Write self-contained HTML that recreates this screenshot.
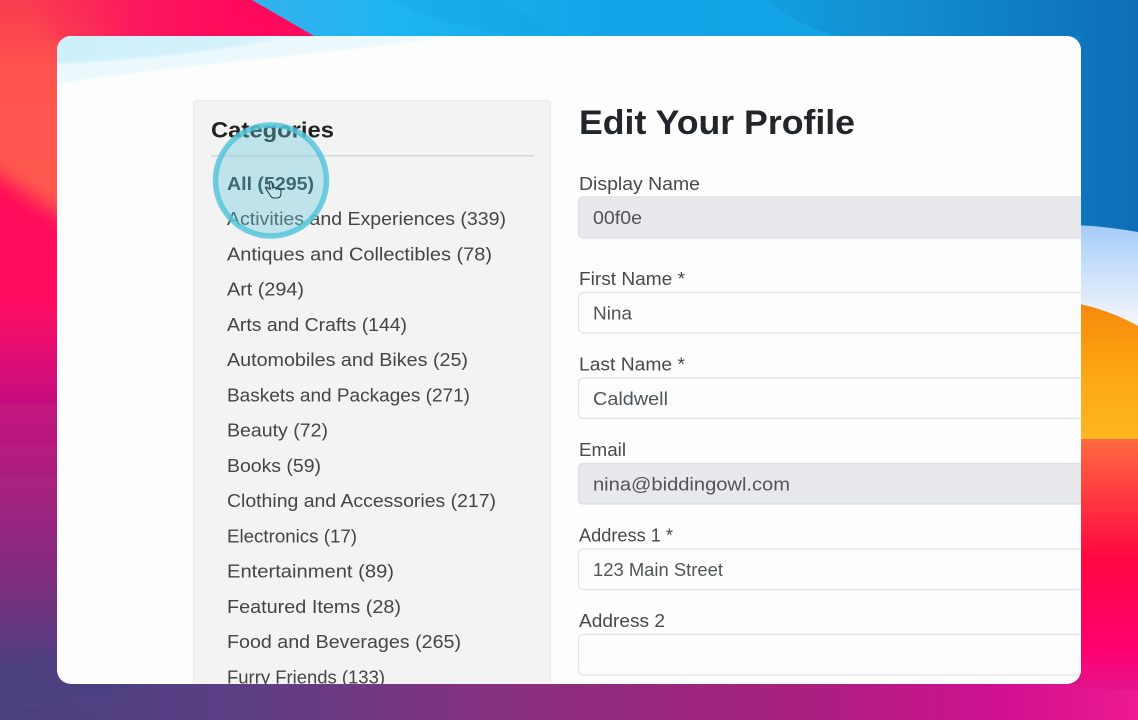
<!DOCTYPE html>
<html lang="en">
<head>
<meta charset="utf-8">
<title>Edit Your Profile</title>
<style>
html,body{margin:0;padding:0;width:1138px;height:720px;overflow:hidden;background:#5a3f85}
svg{display:block;position:absolute;left:0;top:0}
text{font-family:"Liberation Sans",sans-serif}
</style>
</head>
<body>
<svg width="1138" height="720" viewBox="0 0 1138 720" xmlns="http://www.w3.org/2000/svg">
<defs>
<linearGradient id="bottom" x1="0" y1="0" x2="1" y2="0">
<stop offset="0" stop-color="#4a4080"/><stop offset=".2" stop-color="#5a3f85"/><stop offset=".45" stop-color="#88307f"/><stop offset=".7" stop-color="#a8207f"/><stop offset=".88" stop-color="#d01090"/><stop offset="1" stop-color="#ee1a90"/>
</linearGradient>
<linearGradient id="left" x1="0" y1="0" x2="0" y2="720" gradientUnits="userSpaceOnUse">
<stop offset="0" stop-color="#ff0a48"/><stop offset=".42" stop-color="#ff0a62"/><stop offset=".55" stop-color="#c8107f"/><stop offset=".7" stop-color="#a0257f"/><stop offset=".82" stop-color="#7a2f80"/><stop offset=".93" stop-color="#4a4080"/><stop offset="1" stop-color="#4a4080"/>
</linearGradient>
<linearGradient id="coral" x1="0" y1="0" x2="0" y2="220" gradientUnits="userSpaceOnUse">
<stop offset="0" stop-color="#f83a50"/><stop offset=".3" stop-color="#ff5450"/><stop offset="1" stop-color="#ff5a50"/>
</linearGradient>
<linearGradient id="topred" x1="30" y1="0" x2="230" y2="0" gradientUnits="userSpaceOnUse">
<stop offset="0" stop-color="#fb1d58" stop-opacity="0"/><stop offset=".5" stop-color="#fb1a5e"/><stop offset="1" stop-color="#ff0a5c"/>
</linearGradient>
<linearGradient id="blue" x1="250" y1="0" x2="1138" y2="0" gradientUnits="userSpaceOnUse">
<stop offset="0" stop-color="#35b2ec"/><stop offset=".15" stop-color="#1fb5f2"/><stop offset=".4" stop-color="#12a6e8"/><stop offset="1" stop-color="#11a0e0"/>
</linearGradient>
<linearGradient id="swoosh" x1="760" y1="0" x2="1138" y2="0" gradientUnits="userSpaceOnUse">
<stop offset="0" stop-color="#119fdf"/><stop offset=".3" stop-color="#1391d4"/><stop offset=".65" stop-color="#0f7fc6"/><stop offset="1" stop-color="#0e6eb6"/>
</linearGradient>
<linearGradient id="sky" x1="0" y1="225" x2="0" y2="320" gradientUnits="userSpaceOnUse">
<stop offset="0" stop-color="#a4ccf8"/><stop offset=".55" stop-color="#cfe3fa"/><stop offset="1" stop-color="#f2f4fb"/>
</linearGradient>
<linearGradient id="orange" x1="0" y1="305" x2="0" y2="439" gradientUnits="userSpaceOnUse">
<stop offset="0" stop-color="#f58a0c"/><stop offset=".5" stop-color="#fca612"/><stop offset="1" stop-color="#ffb822"/>
</linearGradient>
<linearGradient id="rightred" x1="0" y1="439" x2="0" y2="690" gradientUnits="userSpaceOnUse">
<stop offset="0" stop-color="#ff6a40"/><stop offset=".47" stop-color="#ff0840"/><stop offset=".84" stop-color="#ff0070"/><stop offset="1" stop-color="#e4148e"/>
</linearGradient>
<linearGradient id="wave" x1="57" y1="0" x2="330" y2="0" gradientUnits="userSpaceOnUse">
<stop offset="0" stop-color="#cdf0fb"/><stop offset=".7" stop-color="#d6f2fb"/><stop offset="1" stop-color="#eaf8fc"/>
</linearGradient>
<filter id="b8" x="-30%" y="-30%" width="160%" height="160%"><feGaussianBlur stdDeviation="9"/></filter>
<filter id="b1" x="-5%" y="-20%" width="110%" height="140%"><feGaussianBlur stdDeviation="1.200"/></filter>
<filter id="soft" x="-2%" y="-2%" width="104%" height="104%"><feGaussianBlur stdDeviation="0.35"/></filter>
<clipPath id="card"><rect x="57" y="36" width="1024" height="648" rx="14"/></clipPath>
</defs>

<!-- wallpaper -->
<rect width="1138" height="720" fill="url(#bottom)"/>
<rect x="-40" y="-40" width="170" height="735" fill="url(#left)" filter="url(#b8)"/>
<path d="M-40 -40L160 -40L160 280L-40 150Z" fill="url(#coral)" filter="url(#b8)"/>
<rect x="30" y="0" width="300" height="40" fill="url(#topred)"/>
<path d="M252 0L1138 0L1138 240L1000 240L1000 40L321 40Z" fill="url(#blue)"/>
<path d="M390 0C430 20 470 28 510 36L570 40L500 0Z" fill="#14a4e6" opacity=".4"/>
<path d="M768 0C790 20 810 28 837 36L1000 40L1000 240L1138 240L1138 0Z" fill="url(#swoosh)"/>
<path d="M1075 225C1100 226 1120 229 1138 232L1138 330L1075 330Z" fill="url(#sky)"/>
<path d="M1075 303C1100 308 1120 316 1138 326L1138 439L1075 439Z" fill="url(#orange)"/>
<rect x="1075" y="439" width="63" height="251" fill="url(#rightred)"/>
<rect x="1010" y="36" width="71" height="30" fill="#0f7fc6"/>
<rect x="1010" y="654" width="71" height="30" fill="#d00f88"/>
<rect x="30" y="654" width="50" height="30" fill="#4d3f80"/>

<!-- card -->
<g clip-path="url(#card)">
<rect x="57" y="36" width="1024" height="648" fill="#fdfdfd"/>
<path d="M57 36L450 36C340 54 180 64 57 84Z" fill="#ecf9fc" filter="url(#b1)"/>
<path d="M50 30L310 30L300 36C220 50 150 60 50 64Z" fill="url(#wave)" filter="url(#b1)"/>

<!-- sidebar -->
<rect x="193.500" y="100.500" width="357" height="600" rx="3" fill="#f3f3f3" stroke="#ececec"/>
<g filter="url(#soft)">
<text x="211" y="137.500" font-size="22" font-weight="700" fill="#222" textLength="123" lengthAdjust="spacingAndGlyphs">Categories</text>
<rect x="211" y="155" width="323" height="1.500" fill="#d6d6d6"/>
<g font-size="18.500" fill="#444">
<text x="227" y="190" font-weight="700" fill="#24343d" textLength="87" lengthAdjust="spacingAndGlyphs">All (5295)</text>
<text x="227" y="225" textLength="279" lengthAdjust="spacingAndGlyphs">Activities and Experiences (339)</text>
<text x="227" y="260.500" textLength="265" lengthAdjust="spacingAndGlyphs">Antiques and Collectibles (78)</text>
<text x="227" y="295.500" textLength="77" lengthAdjust="spacingAndGlyphs">Art (294)</text>
<text x="227" y="331" textLength="180" lengthAdjust="spacingAndGlyphs">Arts and Crafts (144)</text>
<text x="227" y="366" textLength="241" lengthAdjust="spacingAndGlyphs">Automobiles and Bikes (25)</text>
<text x="227" y="401.500" textLength="243" lengthAdjust="spacingAndGlyphs">Baskets and Packages (271)</text>
<text x="227" y="436.500" textLength="101" lengthAdjust="spacingAndGlyphs">Beauty (72)</text>
<text x="227" y="472" textLength="94" lengthAdjust="spacingAndGlyphs">Books (59)</text>
<text x="227" y="507" textLength="269" lengthAdjust="spacingAndGlyphs">Clothing and Accessories (217)</text>
<text x="227" y="542.500" textLength="130" lengthAdjust="spacingAndGlyphs">Electronics (17)</text>
<text x="227" y="577.500" textLength="167" lengthAdjust="spacingAndGlyphs">Entertainment (89)</text>
<text x="227" y="613" textLength="174" lengthAdjust="spacingAndGlyphs">Featured Items (28)</text>
<text x="227" y="648" textLength="234" lengthAdjust="spacingAndGlyphs">Food and Beverages (265)</text>
<text x="227" y="683.500" textLength="158" lengthAdjust="spacingAndGlyphs">Furry Friends (133)</text>
</g>
</g>

<!-- form -->
<g filter="url(#soft)">
<text x="579" y="134" font-size="34" font-weight="700" fill="#24262a" textLength="276" lengthAdjust="spacingAndGlyphs">Edit Your Profile</text>
<g fill="#fdfdfd" stroke="#e2e3e5" stroke-width="1.200">
<rect x="578.500" y="197" width="560" height="41" rx="5" fill="#e7e9ec" stroke="#dcdfe2"/>
<rect x="578.500" y="292.500" width="560" height="40.500" rx="5"/>
<rect x="578.500" y="378" width="560" height="40.500" rx="5"/>
<rect x="578.500" y="463.500" width="560" height="40.500" rx="5" fill="#e7e9ec" stroke="#dcdfe2"/>
<rect x="578.500" y="549" width="560" height="40.500" rx="5"/>
<rect x="578.500" y="634.500" width="560" height="40.500" rx="5"/>
</g>
<g font-size="18.500" fill="#484848">
<text x="579" y="190" textLength="121" lengthAdjust="spacingAndGlyphs">Display Name</text>
<text x="579" y="285" textLength="106" lengthAdjust="spacingAndGlyphs">First Name *</text>
<text x="579" y="370.500" textLength="106" lengthAdjust="spacingAndGlyphs">Last Name *</text>
<text x="579" y="456" textLength="47" lengthAdjust="spacingAndGlyphs">Email</text>
<text x="579" y="541.500" textLength="94" lengthAdjust="spacingAndGlyphs">Address 1 *</text>
<text x="579" y="627" textLength="86" lengthAdjust="spacingAndGlyphs">Address 2</text>
</g>
<g font-size="18.500" fill="#505458">
<text x="593" y="224" textLength="49" lengthAdjust="spacingAndGlyphs">00f0e</text>
<text x="593" y="319.500" textLength="39" lengthAdjust="spacingAndGlyphs">Nina</text>
<text x="593" y="405" textLength="75" lengthAdjust="spacingAndGlyphs">Caldwell</text>
<text x="593" y="490.500" textLength="197" lengthAdjust="spacingAndGlyphs">nina@biddingowl.com</text>
<text x="593" y="576" textLength="130" lengthAdjust="spacingAndGlyphs">123 Main Street</text>
</g>
</g>

<!-- cursor highlight -->
<circle cx="271" cy="180.500" r="55.500" fill="#64c8dc" fill-opacity=".36" stroke="#52c4dc" stroke-opacity=".82" stroke-width="5.500"/>
<path d="M269 182l1 7-2-1c-1-1-3 0-2 1l4 6c1 2 2 3 4 3h3c3 0 4-2 4-5v-3c0-1-2-1-2 0 0-2-2-2-3-1 0-2-2-2-3-1l-1-5c0-2-3-2-3-1z" fill="#c4e6ec" fill-opacity=".7" stroke="#24414c" stroke-width="1.100" filter="url(#soft)"/>
</g>
</svg>
</body>
</html>
